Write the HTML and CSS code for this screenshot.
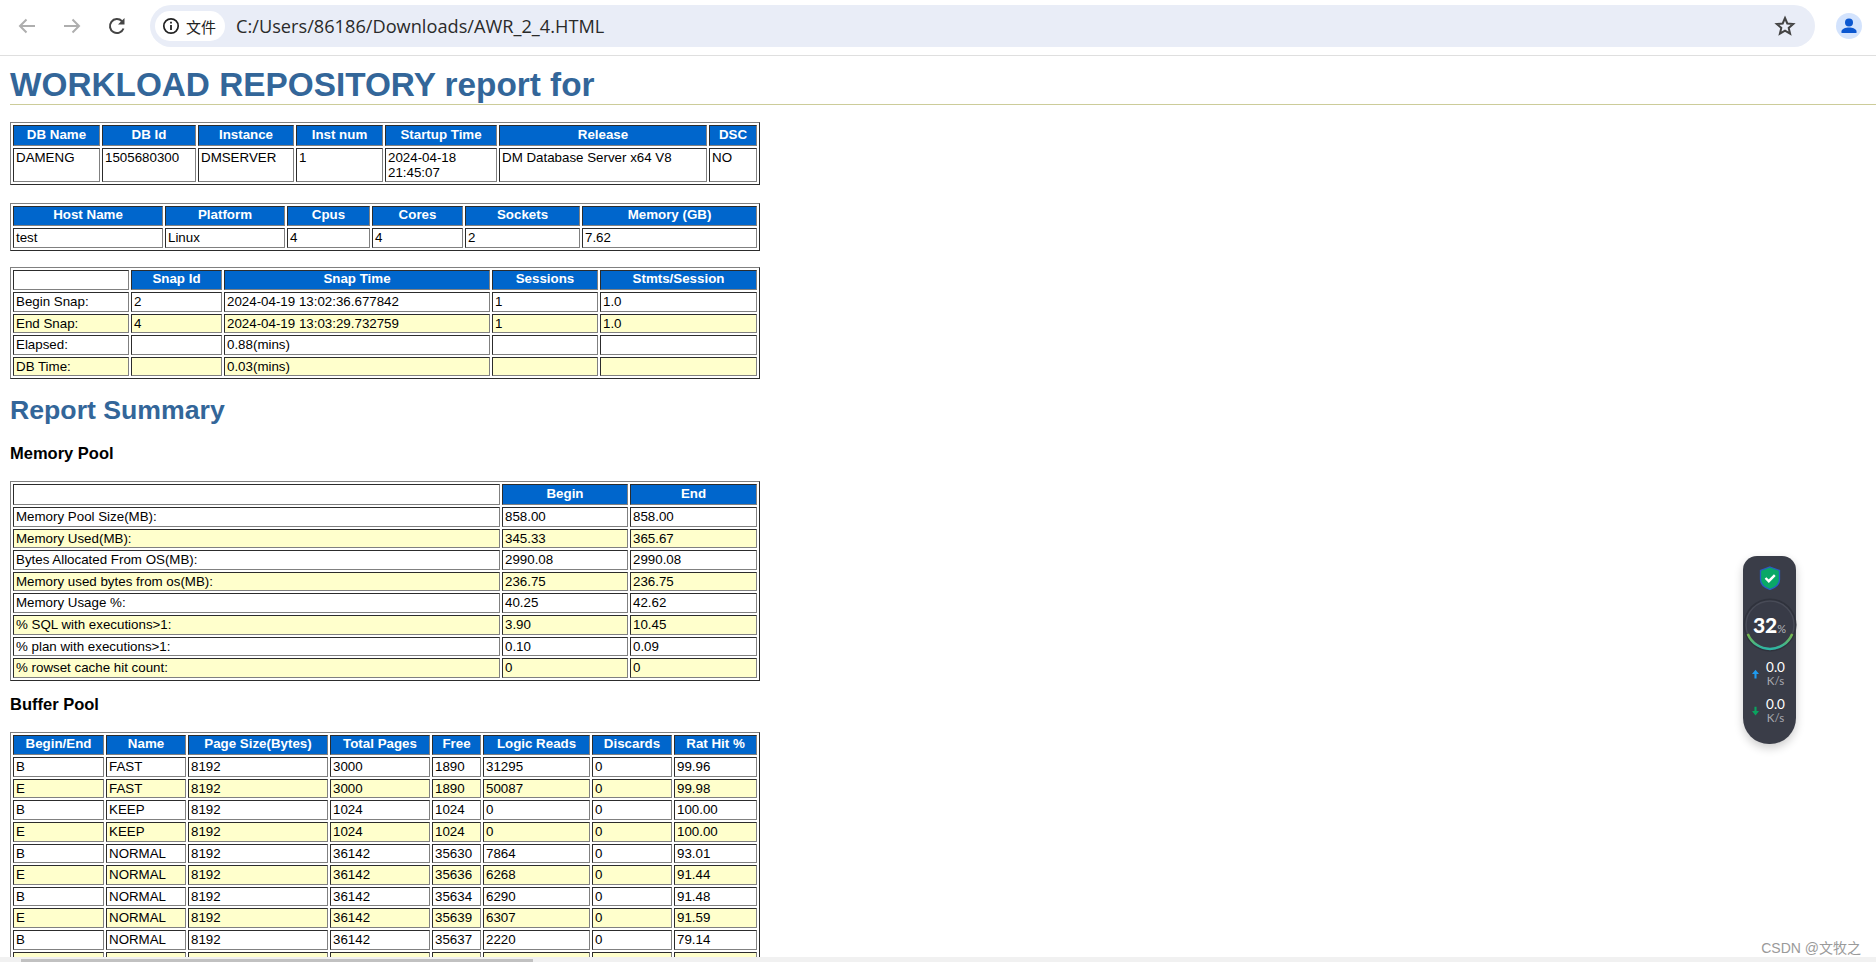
FILE: index.html
```html
<!DOCTYPE html>
<html lang="en">
<head>
  <meta charset="UTF-8">
  <title>AWR_2_4.HTML</title>
  <link rel="stylesheet" href="styles.css">
</head>
<body>
  <div class="toolbar">
    <button class="nav-button">
      <svg width="24" height="24" viewBox="0 0 24 24"><path d="M20 12H5M11.500 5.500 5 12l6.500 6.500" fill="none" stroke="#aeaeae" stroke-width="2"/></svg>
    </button>
    <button class="nav-button">
      <svg width="24" height="24" viewBox="0 0 24 24"><path d="M4 12h15M12.500 5.500 19 12l-6.500 6.500" fill="none" stroke="#aeaeae" stroke-width="2"/></svg>
    </button>
    <button class="nav-button">
      <svg width="24" height="24" viewBox="0 0 24 24"><path d="M18.500 14.500A7 7 0 1 1 17 7.200" fill="none" stroke="#454545" stroke-width="2"/><path d="M19.500 4v6.500H13z" fill="#454545"/></svg>
    </button>
    <div class="omnibox">
      <div class="chip">
        <svg width="18" height="18" viewBox="0 0 18 18"><circle cx="9" cy="9" r="7.200" fill="none" stroke="#222" stroke-width="1.700"/><path d="M9 8v5M9 4.800v1.800" stroke="#222" stroke-width="1.800"/></svg>
        <span>文件</span>
      </div>
      <div class="url">C:/Users/86186/Downloads/AWR_2_4.HTML</div>
      <svg class="star" width="22" height="22" viewBox="0 0 22 22"><path d="M11 3l2.300 5.500 5.900.5-4.500 3.900 1.400 5.800L11 15.600l-5.100 3.100 1.400-5.800L2.800 9l5.900-.5z" fill="none" stroke="#444" stroke-width="2"/></svg>
    </div>
    <div class="avatar">
      <svg width="26" height="26" viewBox="0 0 26 26"><circle cx="13" cy="9.500" r="4" fill="#0b57d0"/><path d="M5.500 20v-1.500c0-2.500 4-4 7.500-4s7.500 1.500 7.500 4V20z" fill="#0b57d0"/></svg>
    </div>
  </div>

  <div class="page">
    <h1>WORKLOAD REPOSITORY report for</h1>

    <table class="report db-table">
      <colgroup><col><col><col><col><col><col><col></colgroup>
      <tr><th>DB Name</th><th>DB Id</th><th>Instance</th><th>Inst num</th><th>Startup Time</th><th>Release</th><th>DSC</th></tr>
      <tr class="tall"><td>DAMENG</td><td>1505680300</td><td>DMSERVER</td><td>1</td><td>2024-04-18 21:45:07</td><td>DM Database Server x64 V8</td><td>NO</td></tr>
    </table>

    <table class="report host-table">
      <colgroup><col><col><col><col><col><col></colgroup>
      <tr><th>Host Name</th><th>Platform</th><th>Cpus</th><th>Cores</th><th>Sockets</th><th>Memory (GB)</th></tr>
      <tr><td>test</td><td>Linux</td><td>4</td><td>4</td><td>2</td><td>7.62</td></tr>
    </table>

    <table class="report snap-table">
      <colgroup><col><col><col><col><col></colgroup>
      <tr><td></td><th>Snap Id</th><th>Snap Time</th><th>Sessions</th><th>Stmts/Session</th></tr>
      <tr><td>Begin Snap:</td><td>2</td><td>2024-04-19 13:02:36.677842</td><td>1</td><td>1.0</td></tr>
      <tr class="alt"><td>End Snap:</td><td>4</td><td>2024-04-19 13:03:29.732759</td><td>1</td><td>1.0</td></tr>
      <tr><td>Elapsed:</td><td></td><td>0.88(mins)</td><td></td><td></td></tr>
      <tr class="alt"><td>DB Time:</td><td></td><td>0.03(mins)</td><td></td><td></td></tr>
    </table>

    <h2>Report Summary</h2>
    <h3>Memory Pool</h3>

    <table class="report memory-table">
      <colgroup><col><col><col></colgroup>
      <tr><td></td><th>Begin</th><th>End</th></tr>
      <tr><td>Memory Pool Size(MB):</td><td>858.00</td><td>858.00</td></tr>
      <tr class="alt"><td>Memory Used(MB):</td><td>345.33</td><td>365.67</td></tr>
      <tr><td>Bytes Allocated From OS(MB):</td><td>2990.08</td><td>2990.08</td></tr>
      <tr class="alt"><td>Memory used bytes from os(MB):</td><td>236.75</td><td>236.75</td></tr>
      <tr><td>Memory Usage %:</td><td>40.25</td><td>42.62</td></tr>
      <tr class="alt"><td>% SQL with executions&gt;1:</td><td>3.90</td><td>10.45</td></tr>
      <tr><td>% plan with executions&gt;1:</td><td>0.10</td><td>0.09</td></tr>
      <tr class="alt"><td>% rowset cache hit count:</td><td>0</td><td>0</td></tr>
    </table>

    <h3 class="buffer-title">Buffer Pool</h3>

    <table class="report buffer-table">
      <colgroup><col><col><col><col><col><col><col><col></colgroup>
      <tr><th>Begin/End</th><th>Name</th><th>Page Size(Bytes)</th><th>Total Pages</th><th>Free</th><th>Logic Reads</th><th>Discards</th><th>Rat Hit %</th></tr>
      <tr><td>B</td><td>FAST</td><td>8192</td><td>3000</td><td>1890</td><td>31295</td><td>0</td><td>99.96</td></tr>
      <tr class="alt"><td>E</td><td>FAST</td><td>8192</td><td>3000</td><td>1890</td><td>50087</td><td>0</td><td>99.98</td></tr>
      <tr><td>B</td><td>KEEP</td><td>8192</td><td>1024</td><td>1024</td><td>0</td><td>0</td><td>100.00</td></tr>
      <tr class="alt"><td>E</td><td>KEEP</td><td>8192</td><td>1024</td><td>1024</td><td>0</td><td>0</td><td>100.00</td></tr>
      <tr><td>B</td><td>NORMAL</td><td>8192</td><td>36142</td><td>35630</td><td>7864</td><td>0</td><td>93.01</td></tr>
      <tr class="alt"><td>E</td><td>NORMAL</td><td>8192</td><td>36142</td><td>35636</td><td>6268</td><td>0</td><td>91.44</td></tr>
      <tr><td>B</td><td>NORMAL</td><td>8192</td><td>36142</td><td>35634</td><td>6290</td><td>0</td><td>91.48</td></tr>
      <tr class="alt"><td>E</td><td>NORMAL</td><td>8192</td><td>36142</td><td>35639</td><td>6307</td><td>0</td><td>91.59</td></tr>
      <tr><td>B</td><td>NORMAL</td><td>8192</td><td>36142</td><td>35637</td><td>2220</td><td>0</td><td>79.14</td></tr>
      <tr class="alt"><td>E</td><td>NORMAL</td><td>8192</td><td>36142</td><td>35637</td><td>2439</td><td>0</td><td>80.47</td></tr>
    </table>
  </div>

  <div class="scrollbar"><div class="scrollbar-thumb"></div></div>

  <div class="monitor">
    <svg class="shield" width="22" height="24" viewBox="0 0 22 24"><path d="M11 1l9.500 3.500v9c0 5-5 8.500-9.500 10-4.500-1.500-9.500-5-9.500-10v-9z" fill="#0aa867" stroke="#2a5cc4" stroke-width="1.300"/><path d="M6.500 12l3.300 3.200 6-6" fill="none" stroke="#fff" stroke-width="2.400"/></svg>
    <div class="gauge">
      <svg width="54" height="54" viewBox="0 0 54 54">
        <defs><linearGradient id="arcFill" x1="0" y1="0" x2="0" y2="1"><stop offset="0" stop-color="#7cb84a"/><stop offset="1" stop-color="#2cb5a5"/></linearGradient></defs>
        <circle cx="27" cy="27" r="26.500" fill="#2f323c"/>
        <circle cx="27" cy="27" r="24" fill="#383b47" stroke="#484b57" stroke-width="1.500"/>
        <path d="M4.800 36a24 24 0 0 0 44.400 0" fill="none" stroke="url(#arcFill)" stroke-width="2.500"/>
      </svg>
      <div class="gauge-text">32<span>%</span></div>
    </div>
    <div class="speed">
      <svg width="7" height="10" viewBox="0 0 8 10"><path d="M4 0l4 5H5.200v5H2.800V5H0z" fill="#1e9bf0"/></svg>
      <div class="speed-text"><div class="speed-value">0.0</div><div class="speed-unit">K/s</div></div>
    </div>
    <div class="speed">
      <svg width="7" height="10" viewBox="0 0 8 10"><path d="M4 10L0 5h2.800V0h2.400v5H8z" fill="#0aa35f"/></svg>
      <div class="speed-text"><div class="speed-value">0.0</div><div class="speed-unit">K/s</div></div>
    </div>
  </div>

  <div class="watermark">CSDN @文牧之</div>
</body>
</html>
```

FILE: styles.css
```css
html, body {
  height: 100%;
}

body {
  margin: 0;
  height: 962px;
  overflow: hidden;
  background: #fff;
  font-family: "Liberation Sans", Arial, sans-serif;
  color: #000;
  display: flex;
  flex-direction: column;
}

/* browser bar */
.toolbar {
  height: 56px;
  flex-shrink: 0;
  box-sizing: border-box;
  display: flex;
  align-items: center;
  padding: 0 14px 3px 15px;
  border-bottom: 1px solid #dfdfdf;
}

.nav-button {
  width: 24px;
  height: 24px;
  padding: 0;
  margin-right: 21px;
  border: none;
  background: none;
}

.omnibox {
  display: flex;
  align-items: center;
  flex-grow: 1;
  height: 42px;
  margin: 0 21px 0 0;
  padding: 0 12px 0 5px;
  border-radius: 21px;
  background: #e9edf7;
}

.chip {
  display: flex;
  align-items: center;
  gap: 6px;
  width: 70px;
  height: 30px;
  box-sizing: border-box;
  padding-left: 7px;
  border-radius: 15px;
  background: #fff;
  font-family: "Noto Sans CJK SC", sans-serif;
  font-size: 15px;
  color: #222;
}

.url {
  flex-grow: 1;
  margin-left: 11px;
  font-family: "Open Sans", sans-serif;
  font-size: 18.200px;
  color: #2a2a2a;
}

.star {
  margin-right: 7px;
}

.avatar {
  width: 26px;
  height: 26px;
  border-radius: 50%;
  background: #d3e3fd;
}

/* report */
.page {
  flex-grow: 1;
  overflow: hidden;
  padding: 0 0 0 10px;
}

h1 {
  margin: 0 0 17px 0;
  height: 49px;
  box-sizing: border-box;
  padding-top: 9px;
  font-size: 33.330px;
  line-height: 39px;
  font-weight: bold;
  color: #336699;
  border-bottom: 1px solid #cccc99;
}

h2 {
  margin: 15px 0 0 0;
  font-size: 26.670px;
  line-height: 28px;
  font-weight: bold;
  color: #336699;
}

h3 {
  margin: 20px 0 18px 0;
  font-size: 16.500px;
  line-height: 19px;
  font-weight: bold;
}

.buffer-title {
  margin-top: 14px;
}

.report {
  width: 750px;
  table-layout: fixed;
  border-collapse: separate;
  border-spacing: 2px;
  border: 1px outset gray;
  margin-bottom: 17px;
  font-size: 13.330px;
}

.db-table {
  margin-bottom: 18px;
}

.host-table {
  margin-bottom: 16px;
}

.memory-table {
  margin-bottom: 14px;
}

.report th,
.report td {
  box-sizing: border-box;
  height: 19.600px;
  padding: 1px 2px;
  border: 1px inset gray;
  line-height: 15px;
  vertical-align: top;
  overflow: hidden;
}

.report th {
  background: #0066cc;
  color: #fff;
  font-weight: bold;
  text-align: center;
  vertical-align: middle;
  height: 20.500px;
  padding: 0 2px 2px 2px;
}

.report tr.alt td {
  background: #ffffcc;
}

.report tr.tall td {
  height: 34px;
}

.db-table col:nth-child(1) { width: 87px; }
.db-table col:nth-child(2) { width: 94px; }
.db-table col:nth-child(3) { width: 96px; }
.db-table col:nth-child(4) { width: 87px; }
.db-table col:nth-child(5) { width: 112px; }
.db-table col:nth-child(6) { width: 208px; }
.db-table col:nth-child(7) { width: 48px; }

.host-table col:nth-child(1) { width: 150px; }
.host-table col:nth-child(2) { width: 120px; }
.host-table col:nth-child(3) { width: 83px; }
.host-table col:nth-child(4) { width: 91px; }
.host-table col:nth-child(5) { width: 115px; }
.host-table col:nth-child(6) { width: 175px; }

.snap-table col:nth-child(1) { width: 116px; }
.snap-table col:nth-child(2) { width: 91px; }
.snap-table col:nth-child(3) { width: 266px; }
.snap-table col:nth-child(4) { width: 106px; }
.snap-table col:nth-child(5) { width: 157px; }

.memory-table col:nth-child(1) { width: 487px; }
.memory-table col:nth-child(2) { width: 126px; }
.memory-table col:nth-child(3) { width: 127px; }

.buffer-table col:nth-child(1) { width: 91px; }
.buffer-table col:nth-child(2) { width: 80px; }
.buffer-table col:nth-child(3) { width: 140px; }
.buffer-table col:nth-child(4) { width: 100px; }
.buffer-table col:nth-child(5) { width: 49px; }
.buffer-table col:nth-child(6) { width: 107px; }
.buffer-table col:nth-child(7) { width: 80px; }
.buffer-table col:nth-child(8) { width: 83px; }

/* things lying over the page */
.scrollbar {
  position: absolute;
  left: 0;
  right: 0;
  bottom: 0;
  height: 5px;
  background: #f1f1f1;
}

.scrollbar-thumb {
  width: 512px;
  height: 3px;
  margin: 2px 0 0 21px;
  background: #c1c1c1;
}

.monitor {
  position: absolute;
  left: 1743px;
  top: 556px;
  width: 53px;
  height: 188px;
  border-radius: 14px 14px 26px 26px;
  background: #3a3d48;
  box-shadow: 0 4px 10px rgba(0,0,0,0.2);
  display: flex;
  flex-direction: column;
  align-items: center;
  padding-top: 10px;
  box-sizing: border-box;
}

.gauge {
  position: relative;
  width: 54px;
  height: 54px;
  margin-top: 8px;
  flex-shrink: 0;
}

.gauge svg {
  display: block;
}

.gauge-text {
  position: absolute;
  inset: 0;
  text-align: center;
  font-family: Lato, sans-serif;
  font-size: 21px;
  font-weight: 900;
  line-height: 54px;
  color: #fff;
}

.gauge-text span {
  font-size: 11px;
  font-weight: normal;
  color: #b5b6bb;
}

.speed {
  display: flex;
  align-items: center;
  gap: 7px;
  margin-top: 6px;
  padding-right: 2px;
  height: 31px;
}

.speed-text {
  font-family: Lato, sans-serif;
  text-align: center;
}

.speed-value {
  font-size: 13.500px;
  line-height: 14px;
  color: #fff;
}

.speed-unit {
  font-size: 11.500px;
  line-height: 13px;
  color: #a9aab0;
}

.watermark {
  position: absolute;
  right: 15px;
  bottom: 5px;
  font-family: "Liberation Sans", "Noto Sans CJK SC", sans-serif;
  font-size: 14px;
  color: #9a9a9a;
}
```
